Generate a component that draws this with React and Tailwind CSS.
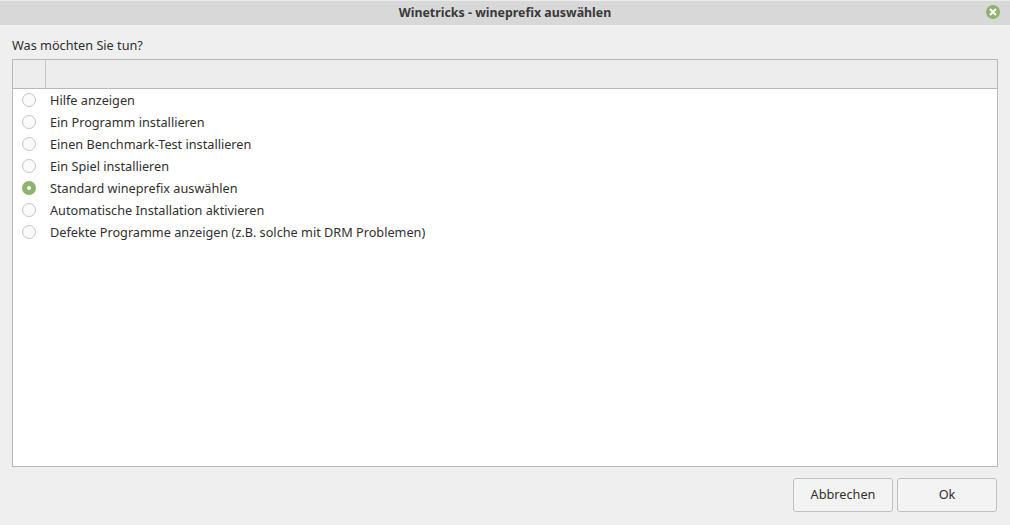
const options = [
  "Hilfe anzeigen",
  "Ein Programm installieren",
  "Einen Benchmark-Test installieren",
  "Ein Spiel installieren",
  "Standard wineprefix auswählen",
  "Automatische Installation aktivieren",
  "Defekte Programme anzeigen (z.B. solche mit DRM Problemen)",
];

function Radio({ checked }) {
  if (checked) {
    return (
      <span className="flex h-[14px] w-[14px] items-center justify-center rounded-full bg-[#8fb36f]">
        <span className="h-[4px] w-[4px] rounded-full bg-white" />
      </span>
    );
  }
  return <span className="h-[14px] w-[14px] rounded-full border border-[#c4c4c4] bg-[#fafafa]" />;
}

function Button({ children }) {
  return (
    <button className="h-[34px] w-[100px] rounded-[3px] border border-[#c0c0c0] bg-[#f3f3f3] text-[12.7px] text-[#303030]">
      {children}
    </button>
  );
}

export default function App() {
  return (
    <div className="flex h-[525px] w-[1010px] flex-col overflow-hidden bg-[#efefef] font-['Noto_Sans',sans-serif] text-[12.7px] text-[#303030]">
      <header className="relative flex h-[25px] items-center justify-center border-t border-[#ececec] bg-[#d8d8d8] text-[12.4px] font-bold text-[#3a3a3a]">
        Winetricks - wineprefix auswählen
        <span className="absolute right-[10px] top-[4px] flex h-[14px] w-[14px] items-center justify-center rounded-full bg-[#8fb36f]">
          <svg width="8" height="8" viewBox="0 0 8 8">
            <path d="M1 1L7 7M7 1L1 7" stroke="#fff" strokeWidth="2" />
          </svg>
        </span>
      </header>

      <div className="flex flex-1 flex-col px-3 pb-[13px]">
        <div className="flex h-[34px] items-center pt-[7px]">Was möchten Sie tun?</div>

        <div className="flex h-[408px] flex-col border border-[#b8b8b8] bg-white">
          <div className="flex h-[29px] shrink-0 border-b border-[#b8b8b8] bg-[#ededed]">
            <div className="w-[33px] border-r border-[#c4c4c4]" />
          </div>
          <ul className="pt-[1px]">
            {options.map((label, i) => (
              <li key={label} className="flex h-[22px] items-center">
                <span className="mb-[2px] flex w-[37px] pl-[9px]">
                  <Radio checked={i === 4} />
                </span>
                <span>{label}</span>
              </li>
            ))}
          </ul>
        </div>

        <div className="mt-[11px] flex justify-end gap-1 pr-px">
          <Button>Abbrechen</Button>
          <Button>Ok</Button>
        </div>
      </div>
    </div>
  );
}
